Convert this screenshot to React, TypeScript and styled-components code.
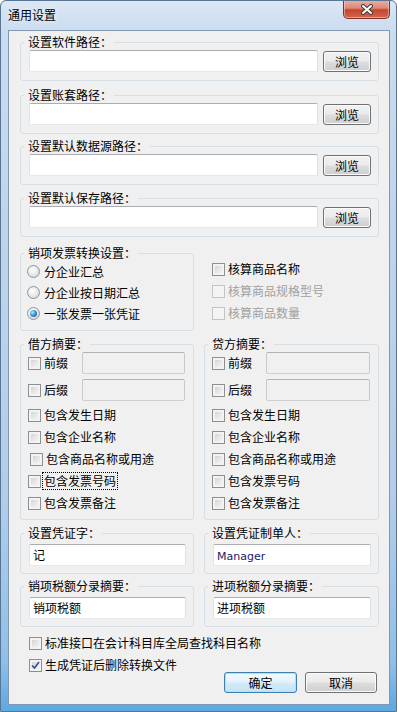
import React from "react";
import styled, { createGlobalStyle, css } from "styled-components";

const GlobalStyle = createGlobalStyle`
  html, body { margin: 0; padding: 0; background: #ffffff; }
  body {
    font-family: "Noto Sans CJK SC", "Liberation Sans", sans-serif;
    font-size: 12px;
    color: #000;
  }
  * { box-sizing: border-box; }
`;

const FONT = `"Noto Sans CJK SC", "Liberation Sans", sans-serif`;

const Window = styled.div`
  width: 397px;
  height: 712px;
  display: flex;
  flex-direction: column;
  border: 1px solid #587593;
  border-radius: 6px 6px 0 0;
  background: linear-gradient(
    180deg,
    #dbe7f4 0px,
    #cadcef 30px,
    #bed4ec 250px,
    #b1cdea 500px,
    #8fc0e9 660px,
    #5aa8e2 712px
  );
  overflow: hidden;
`;

const TitleBar = styled.div`
  height: 29px;
  flex: 0 0 29px;
  display: flex;
  justify-content: space-between;
  align-items: flex-start;
  padding: 0 6px 0 7px;
`;

const Title = styled.div`
  margin-top: 7px;
  font-size: 12px;
  line-height: 14px;
  color: #000;
  text-shadow: 0 0 6px rgba(255, 255, 255, 0.9);
`;

const CloseButton = styled.div`
  width: 47px;
  height: 19px;
  margin-top: -1px;
  display: flex;
  align-items: center;
  justify-content: center;
  border: 1px solid #7d3328;
  border-top: none;
  border-radius: 0 0 5px 5px;
  background: linear-gradient(180deg, #e9b1a4 0%, #dc8a78 45%, #c7452f 55%, #d2654f 100%);
  box-shadow: inset 0 0 0 1px rgba(255, 220, 210, 0.5);
`;

const Client = styled.div`
  flex: 1;
  margin: 0 6px 6px 7px;
  border: 1px solid #8497b0;
  background: #f0f0f0;
  display: flex;
  flex-direction: column;
  padding: 4px 10px 0 11px;
`;

const Group = styled.fieldset<{ $mt?: number }>`
  margin: ${(p) => p.$mt ?? 0}px 0 0 0;
  padding: 0;
  min-width: 0;
  border: 1px solid #d5dfe5;
  border-radius: 3px;
`;

const Legend = styled.legend`
  margin-left: 3px;
  padding: 0 2px 0 4px;
  font-size: 12px;
  line-height: 14px;
`;

const PathBody = styled.div`
  display: flex;
  align-items: center;
  gap: 5px;
  padding: 1px 7px 8px 8px;
`;

const TextBox = styled.div<{ $disabled?: boolean; $width?: number }>`
  height: 22px;
  ${(p) => (p.$width ? `width: ${p.$width}px; flex: 0 0 ${p.$width}px;` : "flex: 1;")}
  border: 1px solid;
  border-color: #abadb3 #dbdfe6 #e3e9ef #e2e3ea;
  border-radius: 2px;
  background: #ffffff;
  padding: 0 3px;
  font-size: 12px;
  line-height: 20px;
  white-space: nowrap;
  overflow: hidden;
  ${(p) =>
    p.$disabled &&
    css`
      background: #f0f0f0;
      border-color: #b3b3b3 #c9c9c9 #cfcfcf #c9c9c9;
    `}
`;

const LatinText = styled.span`
  font-family: "DejaVu Sans", "Liberation Sans", sans-serif;
  font-size: 11px;
  color: #16206a;
`;

const Button = styled.div<{ $width: number; $default?: boolean }>`
  width: ${(p) => p.$width}px;
  flex: 0 0 ${(p) => p.$width}px;
  height: 21px;
  border: 1px solid #707070;
  border-radius: 3px;
  background: linear-gradient(180deg, #f2f2f2 0%, #ebebeb 48%, #dddddd 52%, #cfcfcf 100%);
  box-shadow: inset 0 0 0 1px #fbfbfb;
  font-family: ${FONT};
  font-size: 12px;
  line-height: 19px;
  text-align: center;
  ${(p) =>
    p.$default &&
    css`
      border-color: #3c7fb1;
      background: linear-gradient(180deg, #f1f9fe 0%, #e3f3fc 48%, #d3ebf9 52%, #c3e3f6 100%);
      box-shadow: inset 0 0 0 1px #a9e4fb;
    `}
`;

const MidGrid = styled.div<{ $mt: number }>`
  display: grid;
  grid-template-columns: 174px 175px;
  column-gap: 10px;
  align-items: start;
  margin-top: ${(p) => p.$mt}px;
`;

const RadioBody = styled.div`
  display: flex;
  flex-direction: column;
  padding: 1px 6px 6px 6px;
`;

const RadioRow = styled.label`
  height: 21px;
  display: flex;
  align-items: center;
  gap: 4px;
  line-height: 14px;
`;

const RadioDot = styled.span<{ $checked?: boolean }>`
  position: relative;
  width: 13px;
  height: 13px;
  flex: 0 0 13px;
  border-radius: 50%;
  border: 1px solid #939393;
  background: radial-gradient(circle at 40% 35%, #ffffff 0%, #ececec 45%, #cbcbcb 100%);
  ${(p) =>
    p.$checked &&
    css`
      &::after {
        content: "";
        position: absolute;
        left: 2px;
        top: 2px;
        width: 7px;
        height: 7px;
        border-radius: 50%;
        background: radial-gradient(circle at 35% 35%, #b8ecff 0%, #3b97dc 45%, #0e4a84 100%);
      }
    `}
`;

const CheckColumn = styled.div<{ $pt?: number; $pl?: number }>`
  display: flex;
  flex-direction: column;
  padding-top: ${(p) => p.$pt ?? 0}px;
  padding-left: ${(p) => p.$pl ?? 0}px;
`;

const CheckRow = styled.label<{ $disabled?: boolean; $shift?: number; $width?: number }>`
  height: 22px;
  display: flex;
  align-items: center;
  gap: 3px;
  line-height: 14px;
  white-space: nowrap;
  margin-left: ${(p) => p.$shift ?? 0}px;
  color: ${(p) => (p.$disabled ? "#a0a0a0" : "#000")};
  ${(p) => p.$width && `width: ${p.$width}px; flex: 0 0 ${p.$width}px;`}
`;

const Box = styled.span<{ $disabled?: boolean }>`
  width: 13px;
  height: 13px;
  flex: 0 0 13px;
  display: flex;
  align-items: center;
  justify-content: center;
  border: 1px solid #8e8f8f;
  background: linear-gradient(135deg, #c9c9c9 0%, #e6e6e6 50%, #f8f8f8 100%);
  box-shadow: inset 0 0 0 2px #f3f3f3;
  ${(p) =>
    p.$disabled &&
    css`
      border-color: #c4c4c4;
      background: #f4f4f4;
      box-shadow: none;
    `}
`;

const LabelText = styled.span<{ $focused?: boolean }>`
  ${(p) =>
    p.$focused &&
    css`
      outline: 1px dotted #000;
      outline-offset: 1px;
    `}
`;

const SummaryBody = styled.div`
  display: flex;
  flex-direction: column;
  padding: 1px 8px 5px 7px;
`;

const PrefixRow = styled.div<{ $mt?: number }>`
  display: flex;
  align-items: center;
  height: 22px;
  margin-top: ${(p) => p.$mt ?? 0}px;
`;

const ValueBody = styled.div`
  padding: 4px 7px 7px 8px;
  display: flex;
`;

const Footer = styled.div`
  margin-top: 5px;
  padding-left: 9px;
  display: grid;
  grid-template-columns: 1fr auto;
  grid-template-rows: 22px 18px 21px;
`;

const FooterCheck = styled.div<{ $row: string; $col: string }>`
  grid-row: ${(p) => p.$row};
  grid-column: ${(p) => p.$col};
  align-self: start;
`;

const ButtonBar = styled.div`
  grid-row: 3;
  grid-column: 2;
  display: flex;
  gap: 8px;
  margin-right: 2px;
`;

function CloseGlyph() {
  return (
    <svg width="14" height="11" viewBox="0 0 14 11">
      <path d="M3 2 L11 9 M11 2 L3 9" stroke="#3b3b3b" strokeWidth="4" strokeLinecap="round" />
      <path d="M3 2 L11 9 M11 2 L3 9" stroke="#ffffff" strokeWidth="2" strokeLinecap="round" />
    </svg>
  );
}

function Check({
  label,
  checked,
  disabled,
  focused,
  shift,
  width,
}: {
  label: string;
  checked?: boolean;
  disabled?: boolean;
  focused?: boolean;
  shift?: number;
  width?: number;
}) {
  return (
    <CheckRow $disabled={disabled} $shift={shift} $width={width}>
      <Box $disabled={disabled}>
        {checked && (
          <svg width="9" height="9" viewBox="0 0 9 9">
            <path d="M1 4.5 L3.5 7 L8 1" stroke="#3a4f92" strokeWidth="1.7" fill="none" />
          </svg>
        )}
      </Box>
      <LabelText $focused={focused}>{label}</LabelText>
    </CheckRow>
  );
}

function PathGroup({ title, mt }: { title: string; mt: number }) {
  return (
    <Group $mt={mt}>
      <Legend>{title}</Legend>
      <PathBody>
        <TextBox />
        <Button $width={48}>浏览</Button>
      </PathBody>
    </Group>
  );
}

function SummaryGroup({ title, focusedRow, shiftRow }: { title: string; focusedRow?: string; shiftRow?: string }) {
  const items = ["包含发生日期", "包含企业名称", "包含商品名称或用途", "包含发票号码", "包含发票备注"];
  return (
    <Group>
      <Legend>{title}</Legend>
      <SummaryBody>
        <PrefixRow>
          <Check label="前缀" width={54} />
          <TextBox $disabled />
        </PrefixRow>
        <PrefixRow $mt={5}>
          <Check label="后缀" width={54} />
          <TextBox $disabled />
        </PrefixRow>
        <CheckColumn $pt={3}>
          {items.map((it) => (
            <Check key={it} label={it} focused={it === focusedRow} shift={it === shiftRow ? 2 : 0} />
          ))}
        </CheckColumn>
      </SummaryBody>
    </Group>
  );
}

function ValueGroup({ title, value, latin }: { title: string; value: string; latin?: boolean }) {
  return (
    <Group>
      <Legend>{title}</Legend>
      <ValueBody>
        <TextBox>{latin ? <LatinText>{value}</LatinText> : value}</TextBox>
      </ValueBody>
    </Group>
  );
}

export default function App() {
  return (
    <>
      <GlobalStyle />
      <Window>
        <TitleBar>
          <Title>通用设置</Title>
          <CloseButton>
            <CloseGlyph />
          </CloseButton>
        </TitleBar>
        <Client>
          <PathGroup title="设置软件路径：" mt={0} />
          <PathGroup title="设置账套路径：" mt={7} />
          <PathGroup title="设置默认数据源路径：" mt={5} />
          <PathGroup title="设置默认保存路径：" mt={6} />

          <MidGrid $mt={9}>
            <Group>
              <Legend>销项发票转换设置：</Legend>
              <RadioBody>
                <RadioRow>
                  <RadioDot />
                  分企业汇总
                </RadioRow>
                <RadioRow>
                  <RadioDot />
                  分企业按日期汇总
                </RadioRow>
                <RadioRow>
                  <RadioDot $checked />
                  一张发票一张凭证
                </RadioRow>
              </RadioBody>
            </Group>
            <CheckColumn $pt={12} $pl={8}>
              <Check label="核算商品名称" />
              <Check label="核算商品规格型号" disabled />
              <Check label="核算商品数量" disabled />
            </CheckColumn>
          </MidGrid>

          <MidGrid $mt={6}>
            <SummaryGroup title="借方摘要：" focusedRow="包含发票号码" shiftRow="包含商品名称或用途" />
            <SummaryGroup title="贷方摘要：" />
          </MidGrid>

          <MidGrid $mt={6}>
            <ValueGroup title="设置凭证字：" value="记" />
            <ValueGroup title="设置凭证制单人：" value="Manager" latin />
          </MidGrid>

          <MidGrid $mt={5}>
            <ValueGroup title="销项税额分录摘要：" value="销项税额" />
            <ValueGroup title="进项税额分录摘要：" value="进项税额" />
          </MidGrid>

          <Footer>
            <FooterCheck $row="1" $col="1 / -1">
              <Check label="标准接口在会计科目库全局查找科目名称" />
            </FooterCheck>
            <FooterCheck $row="2 / span 2" $col="1">
              <Check label="生成凭证后删除转换文件" checked />
            </FooterCheck>
            <ButtonBar>
              <Button $width={73} $default>
                确定
              </Button>
              <Button $width={72}>取消</Button>
            </ButtonBar>
          </Footer>
        </Client>
      </Window>
    </>
  );
}
